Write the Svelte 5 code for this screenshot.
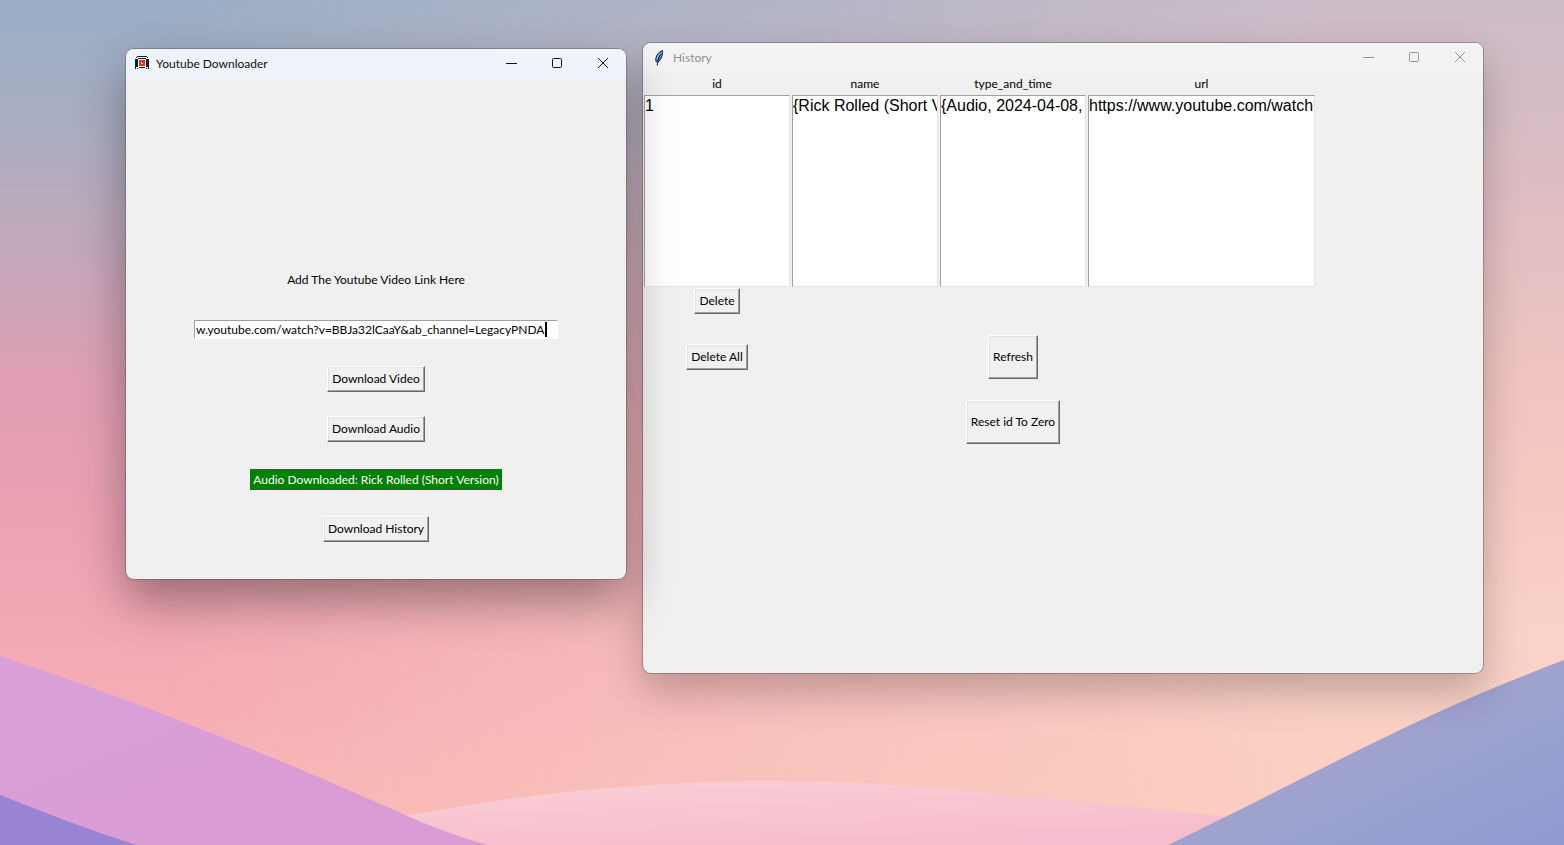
<script>
  let link = $state('w.youtube.com/watch?v=BBJa32lCaaY&ab_channel=LegacyPNDA');

  const columns = [
    { name: 'id', rows: ['1'] },
    { name: 'name', rows: ['{Rick Rolled (Short Version)}'] },
    { name: 'type_and_time', rows: ['{Audio, 2024-04-08, 12:00}'] },
    { name: 'url', rows: ['https://www.youtube.com/watch?v=BBJa32lCaaY'] }
  ];
</script>

{#snippet controls()}
  <div class="controls">
    <button class="control" aria-label="Minimize">
      <svg width="12" height="12" viewBox="0 0 12 12"><path d="M1 6.5h11" /></svg>
    </button>
    <button class="control" aria-label="Maximize">
      <svg width="12" height="12" viewBox="0 0 12 12"><rect x="1.5" y="1.5" width="9" height="9" rx="1" /></svg>
    </button>
    <button class="control" aria-label="Close">
      <svg width="12" height="12" viewBox="0 0 12 12"><path d="M1 1l10 10M11 1L1 11" /></svg>
    </button>
  </div>
{/snippet}

<main class="desktop">
  <svg class="wallpaper" viewBox="0 0 1564 845" preserveAspectRatio="none" aria-hidden="true">
    <defs>
      <linearGradient id="sky-left" x1="0" y1="0" x2="0" y2="1">
        <stop offset="0" stop-color="#98aec6" />
        <stop offset=".15" stop-color="#aaadc1" />
        <stop offset=".27" stop-color="#bea9ba" />
        <stop offset=".45" stop-color="#e09fb4" />
        <stop offset=".6" stop-color="#eba1b2" />
        <stop offset=".78" stop-color="#f4aab4" />
        <stop offset="1" stop-color="#fab7b5" />
      </linearGradient>
      <linearGradient id="sky-right" x1="0" y1="0" x2="0" y2="1">
        <stop offset="0" stop-color="#cbbcc7" />
        <stop offset=".2" stop-color="#dcbdc3" />
        <stop offset=".5" stop-color="#f3c5c0" />
        <stop offset=".75" stop-color="#fad2c7" />
        <stop offset="1" stop-color="#fbcfc0" />
      </linearGradient>
      <linearGradient id="blend" x1="0" y1="0" x2="1" y2="0">
        <stop offset=".1" stop-color="#000" />
        <stop offset=".85" stop-color="#fff" />
      </linearGradient>
      <mask id="fade"><rect width="1564" height="845" fill="url(#blend)" /></mask>
      <linearGradient id="hill" x1="0" y1="0" x2=".5" y2="1">
        <stop offset="0" stop-color="#fad0d5" />
        <stop offset="1" stop-color="#f7bccd" />
      </linearGradient>
      <linearGradient id="orchid" x1="0" y1="0" x2="1" y2="1">
        <stop offset="0" stop-color="#d9a0da" />
        <stop offset="1" stop-color="#db9ad3" />
      </linearGradient>
      <linearGradient id="slate" x1="0" y1="0" x2="1" y2="1">
        <stop offset=".2" stop-color="#a9a0cf" />
        <stop offset=".6" stop-color="#9ca3cf" />
        <stop offset="1" stop-color="#8f9ad3" />
      </linearGradient>
    </defs>
    <rect width="1564" height="845" fill="url(#sky-left)" />
    <rect width="1564" height="845" fill="url(#sky-right)" mask="url(#fade)" />
    <path d="M380 821C480 800 620 781 780 781C930 782 1080 802 1260 820V845H380Z" fill="url(#hill)" />
    <path d="M0 656C140 702 290 763 405 815C435 828 462 838 488 845H0Z" fill="url(#orchid)" />
    <path d="M0 795C45 813 90 830 136 845H0Z" fill="#9984d3" />
    <path d="M1564 660C1530 673 1490 689 1452 706C1370 742 1270 796 1168 845H1564Z" fill="url(#slate)" />
  </svg>

  <section class="window active" aria-label="Youtube Downloader">
    <header class="titlebar">
      <svg class="app-icon" width="16" height="16" viewBox="0 0 16 16" shape-rendering="crispEdges" aria-hidden="true">
        <path fill="#fff" d="M3 1h10v13H3z" />
        <path fill="#10202c" d="M3 0h10v1H3zM2 1h1v1H2zM13 1h1v1h-1zM4 2h8v1H4zM1 3h3v1H1zM12 3h3v1h-3zM1 4h2v7H1zM13 4h2v7h-2zM3 4h1v7H3zM12 4h1v7h-1zM1 11h1v2H1zM14 11h1v2h-1zM3 12h1v1H3zM12 12h1v1h-1zM5 11h6v1H5z" />
        <path fill="#f42a1c" d="M5 4h6v6H5z" />
        <path fill="#fff" d="M7 6h1v1h1v1H7z" />
      </svg>
      <h1>Youtube Downloader</h1>
      {@render controls()}
    </header>
    <form class="downloader" onsubmit={(e) => e.preventDefault()}>
      <label for="link">Add The Youtube Video Link Here</label>
      <div class="entry">
        <input id="link" type="text" bind:value={link} spellcheck="false" autocomplete="off" />
        <span class="caret"></span>
      </div>
      <button class="tk" type="button">Download Video</button>
      <button class="tk" type="button">Download Audio</button>
      <output class="status">Audio Downloaded: Rick Rolled (Short Version)</output>
      <button class="tk" type="button">Download History</button>
    </form>
  </section>

  <section class="window history" aria-label="History">
    <header class="titlebar">
      <svg class="app-icon" width="16" height="16" viewBox="0 0 16 16" aria-hidden="true">
        <path d="M11.500 .6C8 1.500 5.500 5 4.800 8.500C4.500 10.500 5 12 6.200 12.500C9 11 10.800 7.500 11.300 4.500C11.600 3 11.800 1.500 11.500 .6Z" fill="#4b8fe0" stroke="#1b2430" />
        <path d="M10 4C8.500 6 7 9 6.300 15.500" fill="none" stroke="#10151c" />
        <path d="M9.800 2.500C8 4 6.500 6.500 6 9" fill="none" stroke="#9cc6f5" />
      </svg>
      <h1>History</h1>
      {@render controls()}
    </header>
    <div class="records">
      {#each columns as column}
        <div class="column">
          <label for="list-{column.name}">{column.name}</label>
          <select id="list-{column.name}" size="10">
            {#each column.rows as row}
              <option>{row}</option>
            {/each}
          </select>
        </div>
      {/each}
      <button class="tk first">Delete</button>
      <button class="tk first">Delete All</button>
      <button class="tk tall third refresh">Refresh</button>
      <button class="tk tall third">Reset id To Zero</button>
    </div>
  </section>
</main>

<style>
  :global(body) {
    margin: 0;
  }

  .desktop {
    position: relative;
    box-sizing: border-box;
    min-height: 100vh;
    padding: 43px 81px 60px 126px;
    display: grid;
    grid-template-columns: 500fr 840fr;
    align-items: start;
    gap: 17px;
    overflow: hidden;
    font: 12px/15px Lato, 'Open Sans', sans-serif;
    color: #000;
  }

  .wallpaper {
    position: absolute;
    inset: 0;
    width: 100%;
    height: 100%;
  }

  .window {
    position: relative;
    min-width: 0;
    border-radius: 8px;
    background: #f0f0f0;
    box-shadow: 0 0 0 1px rgba(80, 70, 80, 0.4), 0 18px 40px rgba(0, 0, 0, 0.24);
  }

  .active {
    z-index: 1;
    margin-top: 6px;
    box-shadow: 0 0 0 1px rgba(80, 70, 80, 0.4), 0 22px 48px rgba(0, 0, 0, 0.36);
  }

  .titlebar {
    display: flex;
    align-items: center;
    height: 30px;
    padding-left: 8px;
    border-radius: 8px 8px 0 0;
    background: #f3f3f3;
    color: #929292;
  }

  .active .titlebar {
    background: #f0f3f9;
    color: #111;
  }

  .app-icon {
    flex: none;
  }

  h1 {
    flex: 1;
    margin: 0 0 0 6px;
    padding-bottom: 2px;
    font-size: 12px;
    font-weight: 400;
  }

  .controls {
    display: flex;
    align-items: flex-start;
    height: 100%;
  }

  .control {
    display: grid;
    place-items: center;
    width: 46px;
    height: 28px;
    padding: 0;
    border: 0;
    background: none;
    color: inherit;
  }

  .control svg {
    fill: none;
    stroke: currentColor;
  }

  .downloader {
    display: grid;
    grid-auto-rows: 50px;
    place-items: center;
    padding: 175px 20px 25px;
  }

  .entry {
    position: relative;
    width: 364px;
    max-width: 100%;
  }

  input {
    box-sizing: border-box;
    display: block;
    width: 100%;
    height: 19px;
    padding: 0 1px;
    border: 1px solid;
    border-color: #a0a0a0 #fff #fff #a0a0a0;
    outline: 0;
    background: #fff;
    font: inherit;
    color: inherit;
  }

  .caret {
    position: absolute;
    top: 2px;
    right: 11px;
    width: 2px;
    height: 15px;
    background: #000;
  }

  .tk {
    height: 26px;
    padding: 0 4px 2px;
    border: 1px solid;
    border-color: #fff #696969 #696969 #fff;
    box-shadow: inset -1px -1px #a0a0a0, inset 1px 1px #e3e3e3;
    background: #f0f0f0;
    font: inherit;
    color: inherit;
    white-space: nowrap;
  }

  .tall {
    height: 44px;
  }

  .status {
    padding: 3px;
    background: #008000;
    color: #fff;
  }

  .records {
    display: grid;
    grid-template-columns: 148fr 148fr 148fr 229fr;
    grid-template-rows: 215px 26px 86px 44px;
    place-items: center;
    padding: 0 167px 229px 0;
  }

  .column {
    display: flex;
    flex-direction: column;
    align-self: start;
    box-sizing: border-box;
    width: 100%;
    min-width: 0;
    padding: 0 1px;
    text-align: center;
  }

  .column label {
    line-height: 22px;
  }

  select {
    appearance: none;
    display: block;
    width: 100%;
    height: 192px;
    padding: 0;
    border: 1px solid;
    border-color: #a0a0a0 #e3e3e3 #e3e3e3 #a0a0a0;
    border-radius: 0;
    outline: 0;
    overflow: hidden;
    background: #fff;
    font: 16px/18px 'Liberation Sans', Arial, sans-serif;
    color: #000;
  }

  option {
    min-height: 18px;
    padding: 1px 0 0;
    overflow: hidden;
    text-align: left;
  }

  .first {
    grid-column: 1;
  }

  .third {
    grid-column: 3;
  }

  .refresh {
    grid-row: 3;
  }
</style>
